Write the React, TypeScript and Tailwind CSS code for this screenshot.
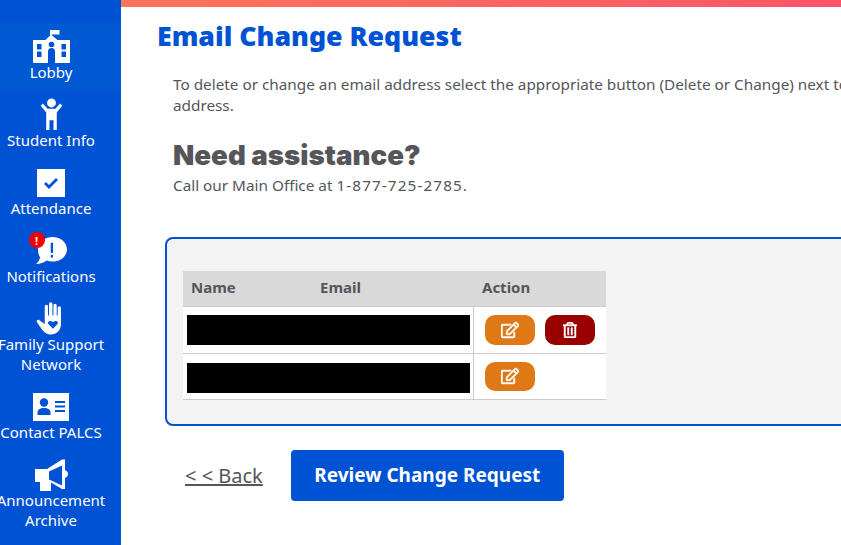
import { FaRegEdit, FaRegTrashAlt } from 'react-icons/fa';

const sans = 'font-["Noto_Sans",sans-serif]';
const blue = '#0052d4';

const SchoolIcon = () => (
  <svg viewBox="0 0 37 33" className="h-[33px] w-[37px]">
    <path d="M17 0h9.500v4.500H18.500V5l6 5H37v23H0V10h12.500L17 5.500z" fill="#fff" />
    <rect x="4" y="14" width="4.500" height="5.500" fill={blue} />
    <rect x="4" y="21.500" width="4.500" height="5.500" fill={blue} />
    <rect x="28.500" y="14" width="4.500" height="5.500" fill={blue} />
    <rect x="28.500" y="21.500" width="4.500" height="5.500" fill={blue} />
    <circle cx="18.500" cy="14.500" r="2.800" fill={blue} />
    <path d="M15 33V21.500a3.500 3.500 0 0 1 7 0V33z" fill={blue} />
  </svg>
);

const ChildIcon = () => (
  <svg viewBox="0 0 26 34" className="h-[33px] w-[25px]" fill="#fff">
    <circle cx="13" cy="5" r="4.600" />
    <path d="M1.800 8 4 5.600 9 11h8l5-5.400L24.200 8 18.500 15v18h-3.400V23h-4.200v10H7.500V15z" />
  </svg>
);

const CheckSquareIcon = () => (
  <svg viewBox="0 0 28 28" className="h-[28px] w-[28px]">
    <rect width="28" height="28" fill="#fff" />
    <path d="m8 14 4 4L20 10" fill="none" stroke={blue} strokeWidth="2.800" />
  </svg>
);

const BubbleIcon = () => (
  <svg viewBox="0 0 34 30" className="h-[29px] w-[33px]">
    <path d="M18 1c8.500 0 15 5.700 15 12.800S26.500 26.500 18 26.500c-2.200 0-4.200-.4-6-1.100C9 27.600 5.500 28.800 1 29c2.200-1.800 3.700-4.200 4.200-7C3.500 19.700 3 16.800 3 13.800 3 6.700 9.500 1 18 1z" fill="#fff" />
    <rect x="16.200" y="7" width="2.400" height="10.500" fill={blue} />
    <rect x="16.200" y="19.500" width="2.400" height="2.800" fill={blue} />
  </svg>
);

const HandIcon = () => (
  <svg viewBox="0 0 32 34" className="h-[33px] w-[31px]">
    <path d="M9 16V4.500a1.700 1.700 0 0 1 3.400 0V14h1V2a1.800 1.800 0 0 1 3.600 0v12h1V3.500a1.700 1.700 0 0 1 3.400 0V14h1V6a1.700 1.700 0 0 1 3.400 0v17c0 6-4.500 10.500-10.500 10.500-4.500 0-7.500-2.500-10-6.500L.8 20.500c-.8-1.200 1.400-3 2.800-1.800L9 23z" fill="#fff" />
    <path d="M17.500 27.500 13 23c-2-2.500 1.700-5 4.500-2.200 2.800-2.800 6.500-.3 4.500 2.200z" fill={blue} />
  </svg>
);

const CardIcon = () => (
  <svg viewBox="0 0 36 28" className="h-[28px] w-[36px]">
    <rect width="36" height="28" fill="#fff" />
    <circle cx="11" cy="9.500" r="4.200" fill={blue} />
    <path d="M4.500 22v-2.500c0-3 2.500-4.500 6.500-4.500s6.500 1.500 6.500 4.500V22z" fill={blue} />
    <rect x="22" y="8" width="10" height="2" fill={blue} />
    <rect x="22" y="12.500" width="10" height="2" fill={blue} />
    <rect x="22" y="17" width="10" height="2" fill={blue} />
  </svg>
);

const HornIcon = () => (
  <svg viewBox="0 0 33 32" className="h-[32px] w-[33px]" fill="#fff">
    <path d="M0 10h12l15-9.500h3V11c2 .8 3 2.300 3 4s-1 3.200-3 4v11h-3L16 23.500V32H5v-9H0zM14 12.500v8l13 6V6.500z" fillRule="evenodd" />
  </svg>
);

const navItems = [
  { label: ['Lobby'], icon: <SchoolIcon />, active: true },
  { label: ['Student Info'], icon: <ChildIcon /> },
  { label: ['Attendance'], icon: <CheckSquareIcon /> },
  { label: ['Notifications'], icon: <BubbleIcon />, badge: true },
  { label: ['Family Support', 'Network'], icon: <HandIcon /> },
  { label: ['Contact PALCS'], icon: <CardIcon /> },
  { label: ['Announcement', 'Archive'], icon: <HornIcon /> },
];

const EditButton = ({ className }: { className: string }) => (
  <button className={`flex w-[50px] items-center justify-center rounded-[10px] bg-[#df7916] text-white ${className}`}>
    <FaRegEdit className="h-[18px] w-[18px]" stroke="currentColor" strokeWidth={14} />
  </button>
);

export default function App() {
  return (
    <div className={`flex h-[545px] w-[841px] overflow-hidden bg-white ${sans}`}>
      <aside className="flex w-[121px] shrink-0 flex-col overflow-hidden bg-[#0052d4] pt-[23px] text-white">
        {navItems.map((item) => (
          <div
            key={item.label[0]}
            className={`flex w-[102px] shrink-0 flex-col items-center pt-[7px] pb-[9px] ${item.active ? 'w-[121px] bg-[#0059d2] pr-[19px]' : ''}`}
          >
            <div className="relative mb-[-1px] flex h-[33px] items-center justify-center text-white">
              {item.icon}
              {item.badge && (
                <span className="absolute -top-[2px] -left-[6px] flex h-[16px] w-[16px] items-center justify-center rounded-full bg-[#f00000] text-[11px] leading-none font-bold">
                  !
                </span>
              )}
            </div>
            {item.label.map((line) => (
              <span key={line} className="text-[15px] leading-[20px] whitespace-nowrap">
                {line}
              </span>
            ))}
          </div>
        ))}
      </aside>

      <main className="min-w-0 flex-1 text-[#54565a]">
        <div className="h-[7px] bg-gradient-to-r from-[#fc7459] to-[#fb5468]" />
        <h1 className="mt-[11px] ml-[36px] text-[26.7px] leading-[36px] font-black whitespace-nowrap text-[#0052d4]">
          Email Change Request
        </h1>
        <p className="mt-[20px] ml-[52px] w-[720px] text-[15.3px] leading-[21px]">
          To delete or change an email address select the appropriate button (Delete or Change) next to the address.
        </p>
        <h2 className='mt-[21px] ml-[52px] font-["Inter",sans-serif] text-[27.7px] leading-[36px] font-black'>
          Need assistance?
        </h2>
        <p className="mt-[2px] ml-[52px] text-[15.3px] leading-[21px]">
          Call our Main Office at <span className="tracking-[1.1px]">1-877-725-2785.</span>
        </p>

        <section className="mt-[41px] ml-[44px] h-[189px] w-[720px] rounded-l-[8px] border-2 border-[#0052d4] bg-[#f3f3f3] pt-[32px] pl-[16px]">
          <table className="w-[423px] table-fixed border-collapse bg-white text-[15px]">
            <thead>
              <tr className="h-[35px] border-b border-[#cccccc] bg-[#d9d9d9] text-left font-bold">
                <th className="w-[129px] pb-[2px] pl-[8px]">Name</th>
                <th className="w-[161px] pb-[2px] pl-[8px]">Email</th>
                <th className="pb-[2px] pl-[9px]">Action</th>
              </tr>
            </thead>
            <tbody>
              <tr className="h-[47px] border-b border-[#cccccc]">
                <td colSpan={2} className="border-r border-[#cccccc] pl-[4px]">
                  <div className="h-[30px] w-[283px] bg-black" />
                </td>
                <td className="pl-[11px]">
                  <div className="flex gap-[10px]">
                    <EditButton className="h-[30px]" />
                    <button className="flex h-[30px] w-[50px] items-center justify-center rounded-[10px] bg-[#990000] text-white">
                      <FaRegTrashAlt className="h-[16px] w-[14px]" stroke="currentColor" strokeWidth={14} />
                    </button>
                  </div>
                </td>
              </tr>
              <tr className="h-[46px] border-b border-[#cccccc]">
                <td colSpan={2} className="border-r border-[#cccccc] pl-[4px]">
                  <div className="mt-[4px] h-[30px] w-[283px] bg-black" />
                </td>
                <td className="pl-[11px]">
                  <EditButton className="h-[29px]" />
                </td>
              </tr>
            </tbody>
          </table>
        </section>

        <div className="mt-[24px] ml-[64px] flex items-center gap-[28px]">
          <a className="text-[20px] underline">&lt; &lt; Back</a>
          <button className="h-[51px] w-[273px] rounded-[4px] bg-[#0052d4] text-[19px] font-bold text-white">
            Review Change Request
          </button>
        </div>
      </main>
    </div>
  );
}
